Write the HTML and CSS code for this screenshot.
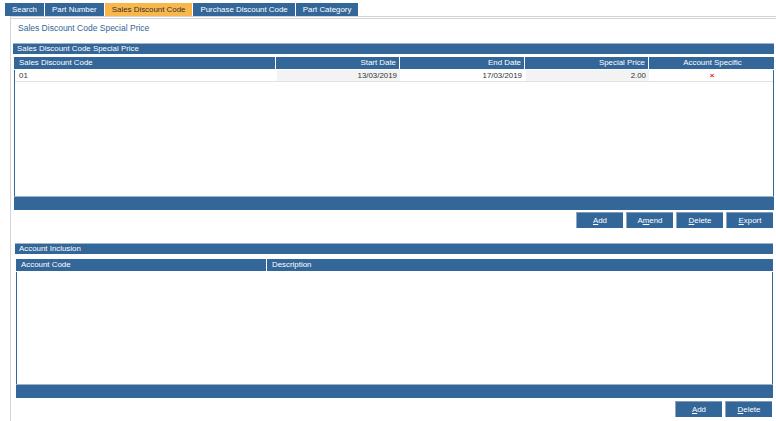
FILE: index.html
```html
<!DOCTYPE html>
<html lang="en">

<head>
  <meta charset="UTF-8">
  <title>Sales Discount Code Special Price</title>
  <link rel="stylesheet" href="styles.css">
</head>

<body>
  <div class="tabs">
    <div class="tab">Search</div>
    <div class="tab">Part Number</div>
    <div class="tab active">Sales Discount Code</div>
    <div class="tab">Purchase Discount Code</div>
    <div class="tab">Part Category</div>
  </div>

  <div class="content">
    <div class="page-title">Sales Discount Code Special Price</div>

    <div class="panel">
      <div class="panel-bar">Sales Discount Code Special Price</div>
      <div class="grid prices">
        <div class="grid-head">
          <div>Sales Discount Code</div>
          <div class="num">Start Date</div>
          <div class="num">End Date</div>
          <div class="num">Special Price</div>
          <div class="mid">Account Specific</div>
        </div>
        <div class="grid-body">
          <div class="grid-row">
            <div>01</div>
            <div class="num alt">13/03/2019</div>
            <div class="num">17/03/2019</div>
            <div class="num alt">2.00</div>
            <div class="mid"><span class="cross">&times;</span></div>
          </div>
        </div>
        <div class="grid-foot"></div>
      </div>
      <div class="actions">
        <button><u>A</u>dd</button>
        <button>A<u>m</u>end</button>
        <button><u>D</u>elete</button>
        <button><u>E</u>xport</button>
      </div>
    </div>

    <div class="panel inclusion">
      <div class="panel-bar">Account Inclusion</div>
      <div class="grid accounts">
        <div class="grid-head">
          <div>Account Code</div>
          <div>Description</div>
        </div>
        <div class="grid-body"></div>
        <div class="grid-foot"></div>
      </div>
      <div class="actions">
        <button><u>A</u>dd</button>
        <button><u>D</u>elete</button>
      </div>
    </div>
  </div>
</body>

</html>
```

FILE: styles.css
```css
* {
  margin: 0;
  padding: 0;
  box-sizing: border-box;
}

body {
  font-family: "Liberation Sans", Arial, sans-serif;
  font-size: 7.9px;
  color: #333;
  background: #fff;
}

.tabs {
  display: flex;
  gap: 1px;
  padding: 3px 0 0 5px;
}

.tab {
  height: 13px;
  line-height: 13px;
  padding: 0 7px;
  background-color: #336699;
  color: #fff;
}

.tab.active {
  background-color: #f9b64b;
  color: #333;
}

.content {
  margin-left: 10px;
  min-height: 405px;
  border-top: 3px double #d4d4d4;
  border-left: 1px solid #d4d4d4;
  padding: 0 2px 0 2px;
}

.page-title {
  height: 24px;
  padding: 3px 5px 0;
  line-height: 12px;
  font-size: 8.5px;
  color: #336699;
}

.panel-bar {
  height: 11px;
  line-height: 10px;
  padding-left: 4px;
  border-top: 1px solid #9db3cc;
  background-color: #336699;
  color: #fff;
}

.grid {
  margin: 3px 0 0 1px;
}

.grid-head,
.grid-row {
  display: grid;
  gap: 1px;
}

.prices .grid-head,
.prices .grid-row {
  grid-template-columns: 261px 123px 124px 123px 1fr;
}

.accounts .grid-head {
  grid-template-columns: 250px 1fr;
}

.grid-head div {
  height: 12px;
  line-height: 12px;
  padding: 0 3px 0 5px;
  background-color: #336699;
  color: #fff;
}

.grid-body {
  margin-top: 1px;
  border-left: 1px solid #336699;
  border-right: 1px solid #336699;
}

.prices .grid-body {
  height: 126px;
}

.accounts .grid-body {
  height: 112px;
}

.grid-row {
  border-bottom: 1px solid #e2e2e2;
}

.grid-row div {
  height: 11px;
  line-height: 11px;
  padding: 0 3px 0 4px;
}

.grid-row .alt {
  background-color: #f3f3f3;
}

.num {
  text-align: right;
}

.mid {
  text-align: center;
}

.cross {
  color: #e41b1b;
  font-weight: bold;
  font-size: 8px;
}

.grid-foot {
  height: 14px;
  border-top: 1px solid #9db3cc;
  background-color: #336699;
}

.actions {
  display: flex;
  justify-content: flex-end;
  gap: 3px;
  margin-top: 2px;
  padding-right: 1px;
}

.actions button {
  width: 47px;
  height: 16px;
  border: none;
  border-left: 1px solid #8fa8c4;
  border-top: 1px solid #7f9cbd;
  background-color: #336699;
  color: #fff;
  font-family: inherit;
  font-size: 7.9px;
}

.inclusion {
  margin: 15px 1px 0 2px;
}

.inclusion .grid {
  margin: 5px 0 0 1px;
}

.inclusion .actions {
  margin-top: 3px;
  padding-right: 1px;
}
```
